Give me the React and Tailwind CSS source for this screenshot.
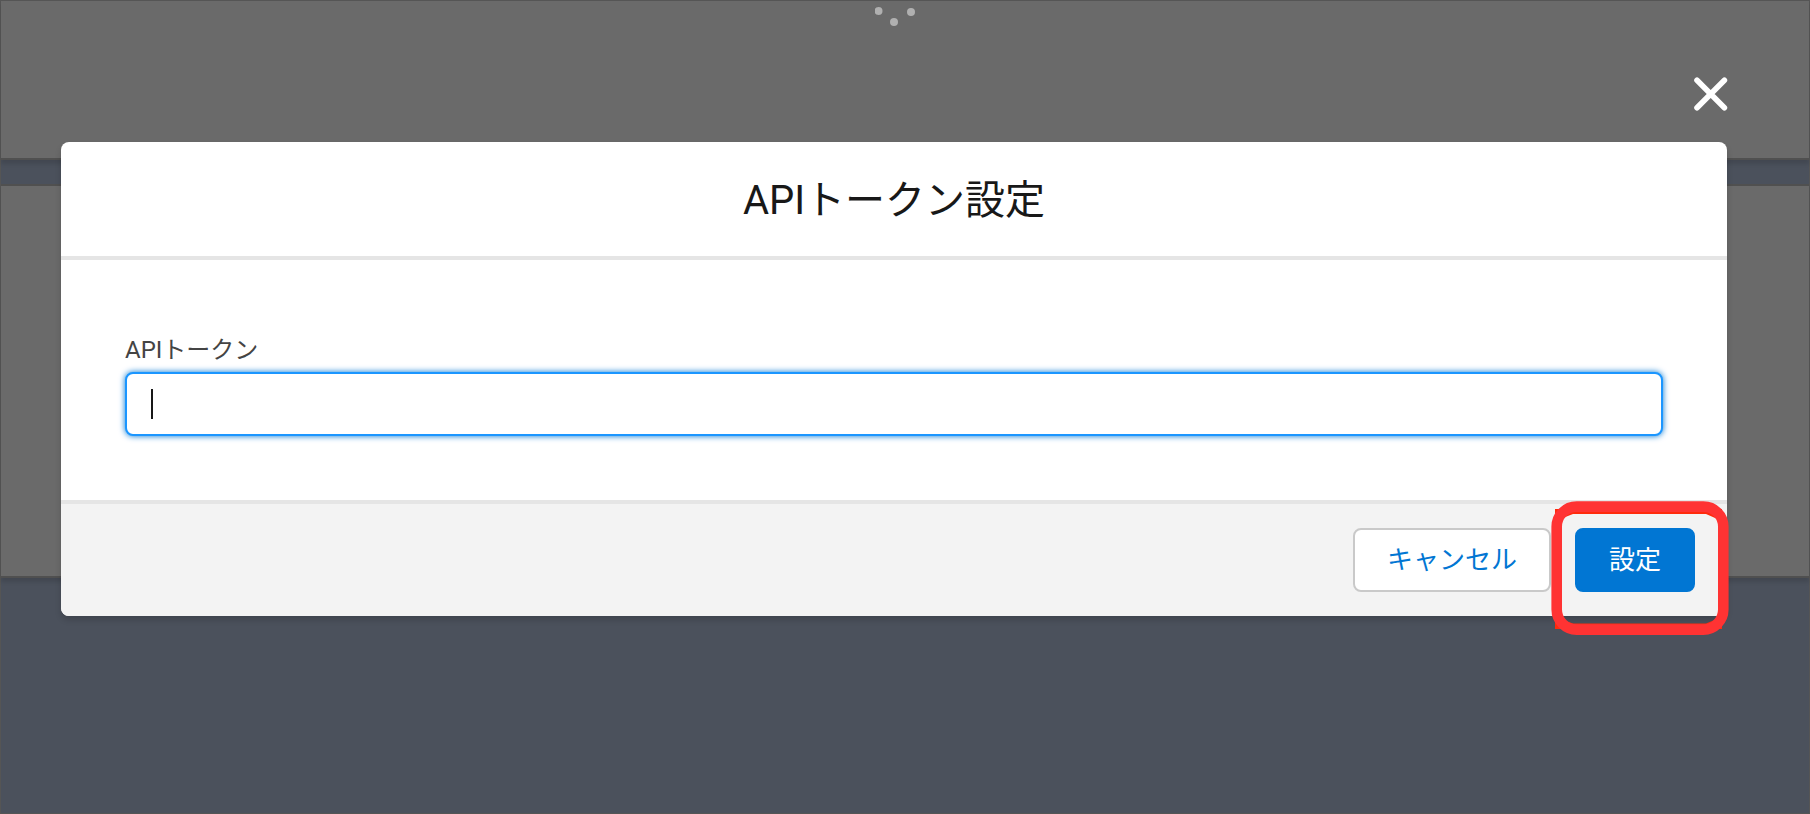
import React, { useState } from "react";

function BackgroundPage() {
  return (
    <div aria-hidden="true" className="min-h-screen border border-[#555555] bg-[#4b515c]">
      <div className="h-[159px] border-b-2 border-[#505050] bg-[#6a6a6a] shadow-[0_4px_4px_rgba(0,0,0,0.12)]">
        {/* loading dots */}
        <svg className="mx-auto" width="60" height="30" viewBox="0 0 60 30" fill="#b0b0b0">
          <circle cx="3.5" cy="10" r="4" />
          <circle cx="19" cy="21" r="4" />
          <circle cx="36" cy="11" r="4" />
        </svg>
      </div>
      <div className="mt-6 h-[394px] border-y-2 border-[#505050] bg-[#6a6a6a] shadow-[0_4px_4px_rgba(0,0,0,0.12)]" />
    </div>
  );
}

export default function App() {
  const [token, setToken] = useState("");

  return (
    <div className="relative font-['Roboto','Noto_Sans_CJK_JP',sans-serif]">
      <BackgroundPage />

      <div className="absolute inset-0 flex flex-col pt-[77px] pr-[83px] pl-[61px]">
        <button type="button" aria-label="閉じる" className="mb-[31px] self-end">
          <svg
            className="overflow-visible"
            width="34"
            height="34"
            viewBox="0 0 34 34"
            stroke="#ffffff"
            strokeWidth="5.6"
            strokeLinecap="round"
          >
            <path d="M4 3.200 31.400 30.800M31.400 3.200 4 30.800" />
          </svg>
        </button>

        <form
          role="dialog"
          aria-labelledby="modal-title"
          onSubmit={(e) => e.preventDefault()}
          className="rounded-lg bg-white shadow-[0_4px_6px_rgba(0,0,0,0.16)]"
        >
          <header className="border-b-4 border-[#e5e5e5] px-8 pt-[34px] pb-[30px]">
            <h2 id="modal-title" className="text-center text-[40px] leading-[50px] text-[#181818]">
              APIトークン設定
            </h2>
          </header>

          <div className="px-16 pt-[72px] pb-16">
            <label htmlFor="api-token" className="mb-1 block text-2xl leading-9 text-[#444444]">
              APIトークン
            </label>
            <div className="relative">
              <input
                id="api-token"
                type="text"
                value={token}
                onChange={(e) => setToken(e.target.value)}
                className="block h-16 w-full rounded-lg border-2 border-[#1b96ff] bg-white px-6 text-[26px] text-[#181818] caret-transparent shadow-[0_0_6px_#0176d3] outline-none"
              />
              {token === "" && <span className="absolute top-[17px] left-[26px] h-[30px] w-0.5 bg-[#181818]" />}
            </div>
          </div>

          <footer className="flex justify-end gap-6 rounded-b-lg border-t-4 border-[#e5e5e5] bg-[#f3f3f3] px-8 py-6">
            <button
              type="button"
              className="h-16 rounded-lg border-2 border-[#c9c9c9] bg-white px-8 text-[26px] leading-[60px] text-[#0176d3]"
            >
              キャンセル
            </button>
            <div className="relative">
              <button
                type="submit"
                className="h-16 rounded-lg border-2 border-[#0176d3] bg-[#0176d3] px-8 text-[26px] leading-[60px] text-white"
              >
                設定
              </button>
              {/* red marker round the submit button */}
              <svg
                className="pointer-events-none absolute -top-[27px] -left-6"
                width="178"
                height="135"
                viewBox="0 0 178 135"
                fill="none"
              >
                <path d="M4 8H171V20L155 13H22L4 20Z" fill="#ff2a0c" />
                <path d="M4 128H171V116L155 122.500H22L4 116Z" fill="#ff2a0c" />
                <rect x="5.700" y="5.600" width="166.600" height="123" rx="20" stroke="#ff3333" strokeWidth="10.600" />
              </svg>
            </div>
          </footer>
        </form>
      </div>
    </div>
  );
}
